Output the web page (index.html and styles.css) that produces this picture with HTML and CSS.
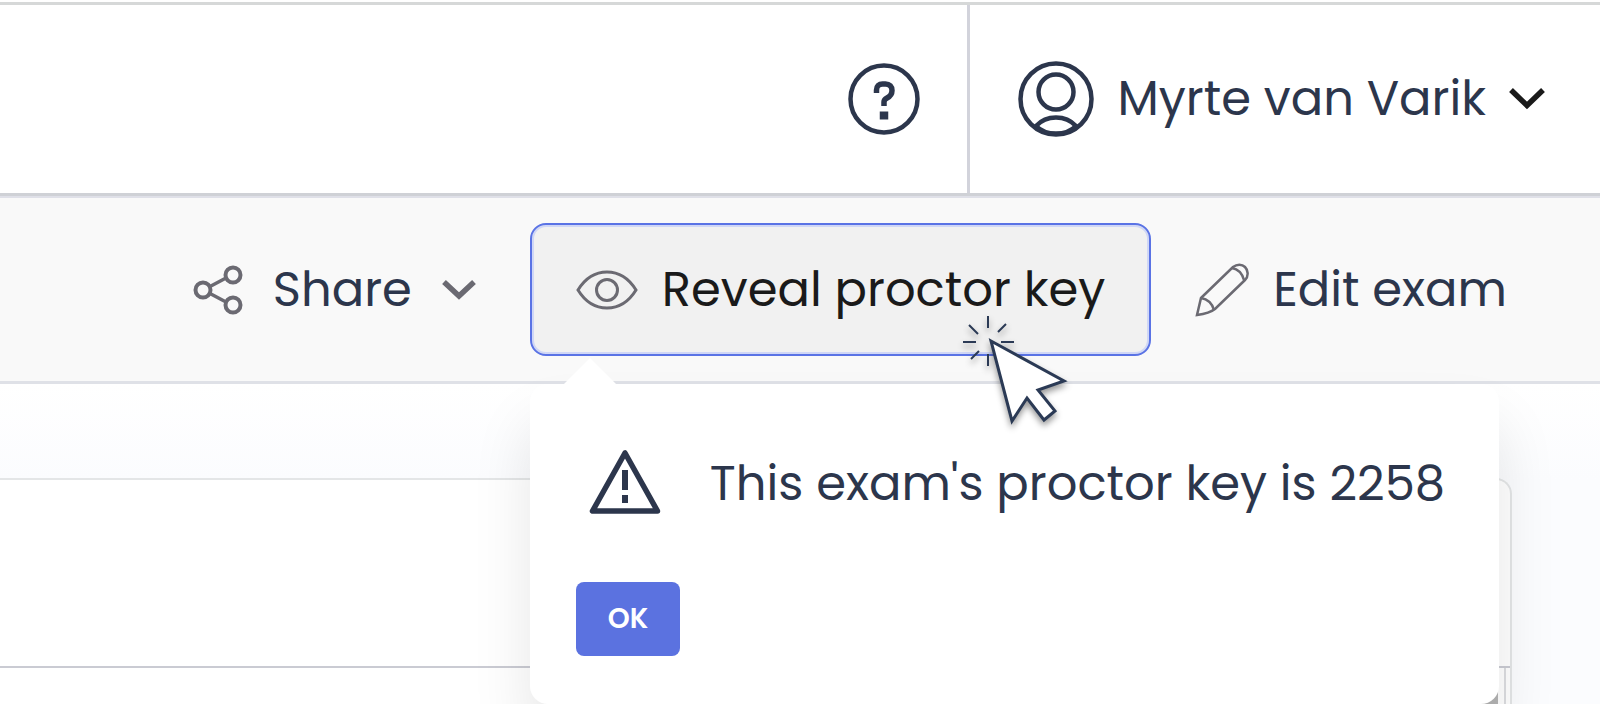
FILE: index.html
```html
<!DOCTYPE html>
<html lang="en">
  <head>
    <meta charset="UTF-8" />
    <meta name="viewport" content="width=device-width, initial-scale=1.0" />
    <link rel="stylesheet" href="styles.css">
    <title>Exam</title>
  </head>
  <body>
    <header class="header">
      <button class="header__help" aria-label="Help">
        <svg class="icon" width="72" height="72" viewBox="0 0 72 72" fill="none" stroke="currentColor">
          <circle cx="36" cy="36" r="33.5" stroke-width="4.5" />
          <path d="M28.5 30v-3c0-4 2.500-6 6-6h3c4 0 6.500 2.500 6.500 6.500s-2 6-5 7.500c-2 1-3 2-3 4v4" stroke-width="5.500" />
          <path d="M36 48.500v8" stroke-width="8.500" />
        </svg>
      </button>
      <button class="header__user">
        <svg class="icon" width="76" height="76" viewBox="0 0 76 76" fill="none" stroke="currentColor" stroke-width="4.500">
          <circle cx="38" cy="38" r="35.500" />
          <circle cx="38" cy="31" r="17.500" />
          <path d="M18 65c6-6.500 12-8.500 20-8.500s14 2 20 8.500c-6 6-12 7.500-20 7.500S24 71 18 65z" />
        </svg>
        <span class="header__name">Myrte van Varik</span>
        <svg class="icon icon_dark" width="36" height="24" viewBox="0 0 36 24" fill="none" stroke="currentColor" stroke-width="5.500">
          <path d="M2 3l16 15.500L34 3" />
        </svg>
      </button>
    </header>

    <div class="toolbar">
      <button class="toolbar__button toolbar__button_share">
        <svg class="icon icon_grey" width="50" height="50" viewBox="0 0 50 50" fill="none" stroke="currentColor" stroke-width="4">
          <circle cx="10" cy="25" r="7.500" />
          <circle cx="40" cy="10" r="7.500" />
          <circle cx="40" cy="40" r="7.500" />
          <path d="M17 21.500L33 13M17 28.500L33 37" stroke-width="3.500" />
        </svg>
        <span>Share</span>
        <svg class="icon icon_grey" width="34" height="22" viewBox="0 0 34 22" fill="none" stroke="currentColor" stroke-width="5.500">
          <path d="M2 3l15 14L32 3" />
        </svg>
      </button>

      <div class="reveal">
        <button class="toolbar__button toolbar__button_active">
          <svg class="icon icon_grey" width="62" height="42" viewBox="0 0 62 42" fill="none" stroke="currentColor" stroke-width="3">
            <path d="M2 21C10 8 20 3 31 3s21 5 29 18c-8 13-18 18-29 18S10 34 2 21z" />
            <circle cx="31" cy="21" r="10.500" />
          </svg>
          <span>Reveal proctor key</span>
        </button>

        <div class="popover" role="dialog" aria-label="Proctor key">
          <div class="popover__message">
            <svg class="icon" width="74" height="68" viewBox="0 0 74 68" fill="none" stroke="currentColor">
              <path d="M37 5L4.500 63h65z" stroke-width="5.500" stroke-linejoin="round" />
              <path d="M37 22v20M37 47v8" stroke-width="6" />
            </svg>
            <span>This exam's proctor key is 2258</span>
          </div>
          <button class="popover__ok">OK</button>
        </div>

        <svg class="cursor" width="130" height="130" viewBox="0 0 130 130" fill="none" stroke="#2b3a55">
          <path d="M38 6v12M38 44v12M13 32h13M51 32h13M19 15l9 9M56 14l-8 8M21 49l8-8" stroke-width="2" />
          <path d="M41 31l73 40-26 9 17 21-11 9-17-22-15 23z" fill="#fff" stroke-width="3" />
        </svg>
      </div>

      <button class="toolbar__button">
        <svg class="icon icon_grey" width="54" height="54" viewBox="0 0 54 54" fill="none" stroke="currentColor" stroke-width="2.500">
          <path d="M2 52l4-17L38 4c4-3 9-3 12 0s4 9 0 13L20 46c-5 4-11 5-18 6z" />
          <path d="M6 35c6 1 11 5 13 12M37 5c6 1 10 5 12 12" />
        </svg>
        <span>Edit exam</span>
      </button>
    </div>

    <main class="main">
      <section class="card">
        <div class="card__header"></div>
        <div class="card__body">
          <div class="card__preview">
            <div class="card__thumb"></div>
          </div>
        </div>
      </section>
    </main>
  </body>
</html>
```
FILE: styles.css
```css
*,
*::after,
*::before {
  box-sizing: border-box;
  margin: 0;
  padding: 0;
}

body {
  display: flex;
  flex-direction: column;
  min-height: 100vh;
  overflow: hidden;
  background: linear-gradient(#fff 384px, #fbfcfe 480px);
  color: #2c364c;
  font-family: Poppins, Inter, sans-serif;
  font-size: 48px;
  line-height: 72px;
}

button {
  border: none;
  background: none;
  color: inherit;
  font: inherit;
  white-space: nowrap;
  cursor: pointer;
}

.icon {
  display: block;
  flex-shrink: 0;
}

.icon_dark {
  color: #1a1a1a;
}

.icon_grey {
  color: #6b6a72;
}

.header {
  display: flex;
  justify-content: flex-end;
  margin-top: 2px;
  border-top: 3px solid #d6d8d8;
  border-bottom: 3px solid #cfd1d6;
  background: #fff;
}

.header__help {
  padding: 58px 47px;
}

.header__user {
  display: flex;
  align-items: center;
  gap: 23px;
  padding: 0 55px 0 48px;
  border-left: 3px solid #d2d3db;
}

.toolbar {
  display: flex;
  justify-content: flex-end;
  align-items: center;
  padding: 25px 49px;
  border-top: 2px solid #dfe0e8;
  border-bottom: 3px solid #dfe1e7;
  background: #f9f9f9;
}

.toolbar__button {
  display: flex;
  align-items: center;
  gap: 24px;
  min-height: 133px;
  padding: 0 44px;
}

.toolbar__button_share {
  gap: 30px;
  padding: 0 54px;
}

.toolbar__button_active {
  border: 2px solid #5a73e5;
  border-radius: 16px;
  background: #f1f1f1;
  box-shadow: inset 0 0 0 2px #d0d7f6;
  color: #1a1a1a;
}

.reveal {
  position: relative;
}

.popover {
  position: absolute;
  top: 161px;
  left: 0;
  z-index: 1;
  padding: 64px 54px 48px 46px;
  border-radius: 18px;
  background: #fff;
  box-shadow: 0 40px 60px rgba(0, 0, 0, 0.1);
  white-space: nowrap;
}

.popover::before {
  content: "";
  position: absolute;
  top: -26px;
  left: 32px;
  border: 28px solid transparent;
  border-top: none;
  border-bottom-color: #fff;
}

.popover__message {
  display: flex;
  align-items: flex-start;
  gap: 48px;
  padding-left: 12px;
}

.popover__ok {
  margin-top: 62px;
  padding: 0 32px;
  border-radius: 8px;
  background: #5b72e0;
  color: #fff;
  font-size: 28px;
  font-weight: 600;
  line-height: 74px;
}

.cursor {
  position: absolute;
  top: 87px;
  left: 420px;
  z-index: 2;
  filter: drop-shadow(0 4px 3px rgba(0, 0, 0, 0.4));
}

.main {
  display: flex;
  flex: 1;
  padding: 94px 88px 0 0;
}

.card {
  display: flex;
  flex: 1;
  flex-direction: column;
  border: 2px solid #e4e6e7;
  border-bottom: none;
  border-left: none;
  border-top-right-radius: 16px;
  background: #fff;
}

.card__header {
  height: 188px;
  border-bottom: 2px solid #cacbd3;
}

.card__body {
  display: flex;
  flex: 1;
  padding-right: 4px;
}

.card__preview {
  display: flex;
  flex: 1;
  justify-content: flex-end;
  padding-right: 6px;
  border-right: 2px solid #dcdde0;
}

.card__thumb {
  width: 200px;
  background: #b5b5b5;
}
```
